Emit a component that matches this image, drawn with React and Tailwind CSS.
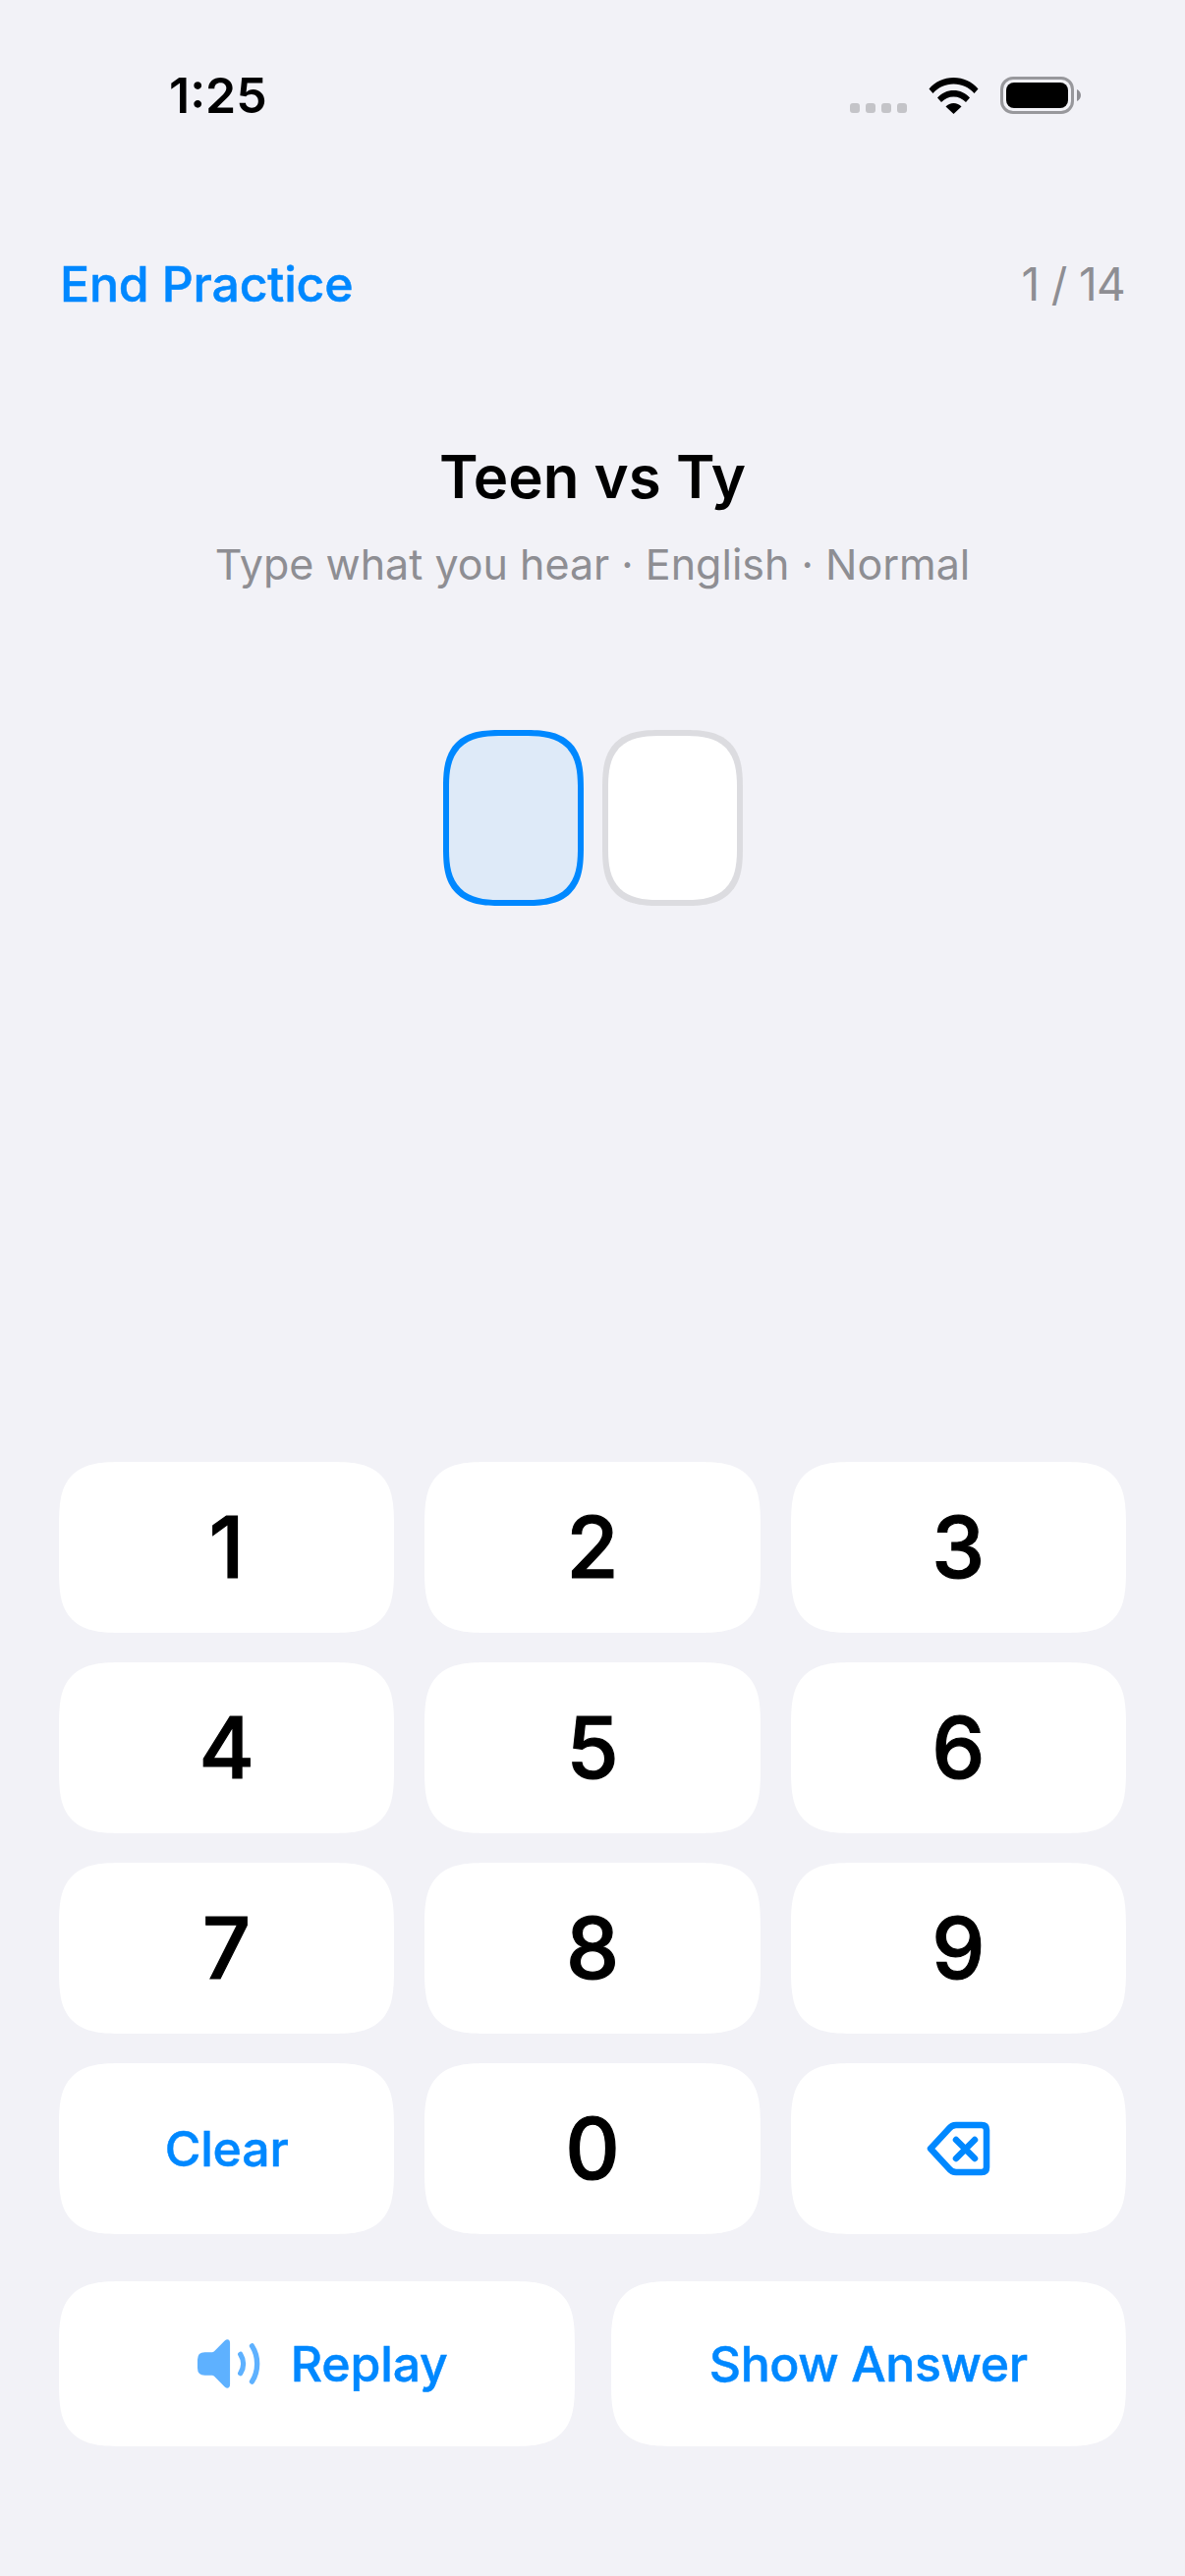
const BLUE = '#0088ff';

const SignalDots = () => (
  <div className="flex gap-[6px] pb-[1px]">
    {[0, 1, 2, 3].map((i) => (
      <div key={i} className="w-[10px] h-[10px] rounded-[3px] bg-[#c4c4c8]" />
    ))}
  </div>
);

const WifiIcon = () => (
  <svg width="51" height="38" viewBox="0 0 51 38" fill="#000">
    <path d="M0.5 12.5 C7 5 15.5 1 25.5 1 C35.5 1 44 5 50.5 12.5 L46.5 17 C41 11 34 7.5 25.5 7.5 C17 7.5 10 11 4.5 17 Z" />
    <path d="M9 21.5 C13.5 16.5 19 14 25.5 14 C32 14 37.5 16.5 42 21.5 L38 26 C34.5 22.5 30.5 20.5 25.5 20.5 C20.5 20.5 16.5 22.5 13 26 Z" />
    <path d="M17.5 30.5 C19.5 28.5 22.5 27 25.5 27 C28.5 27 31.5 28.5 33.5 30.5 L25.5 38 Z" />
  </svg>
);

const BatteryIcon = () => (
  <div className="flex items-center gap-[3px]">
    <div className="w-[75px] h-[38px] rounded-[13px] border-[3px] border-[#98989c] p-[3px]">
      <div className="w-full h-full rounded-[8px] bg-black" />
    </div>
    <svg width="4" height="12" viewBox="0 0 4 12" fill="#8e8e93">
      <path d="M0 0 C2.5 1 4 3.5 4 6 C4 8.5 2.5 11 0 12 Z" />
    </svg>
  </div>
);

const BackspaceIcon = () => (
  <svg width="65" height="56" viewBox="0 0 65 56" fill="none" stroke={BLUE} strokeWidth="6.5" strokeLinejoin="round" strokeLinecap="round">
    <path d="M4 28 L22.5 8 Q25.5 4 30 4 L56 4 Q61 4 61 9 L61 47 Q61 52 56 52 L30 52 Q25.5 52 22.5 48 Z" />
    <path d="M30 19 L49 38 M49 19 L30 38" />
  </svg>
);

const SpeakerIcon = () => (
  <svg width="64" height="52" viewBox="0 0 60 48" fill="none">
    <path
      d="M7 13 L14 13 Q15 13 16 12 L26 2 C28 0 31 0.5 31 4 L31 44 C31 47.5 28 48 26 46 L16 36 Q15 35 14 35 L7 35 Q0 35 0 28 L0 20 Q0 13 7 13 Z"
      fill="#5eb1ff"
    />
    <path d="M41 15 C44.5 20.5 44.5 27.5 41 33" stroke="#5eb1ff" strokeWidth="5" strokeLinecap="round" />
    <path d="M52 7 C58.5 17 58.5 31 52 41" stroke="#5eb1ff" strokeWidth="5" strokeLinecap="round" />
  </svg>
);

const Key = ({ children }) => (
  <button className="h-[174px] rounded-[66px] [corner-shape:superellipse(1.6)] bg-white flex items-center justify-center">
    {children}
  </button>
);

const Digit = ({ value }) => (
  <Key>
    <span className="text-[86px] font-medium text-black leading-none [-webkit-text-stroke:1.2px_black]">{value}</span>
  </Key>
);

export default function App() {
  return (
    <div className="w-[1206px] h-[2622px] bg-[#f2f2f7] flex flex-col font-['Inter',sans-serif] overflow-hidden">
      {/* Status bar */}
      <div className="h-[78px] mt-[60px] pl-[172px] pr-[106px] flex items-start justify-between">
        <span className="text-[50px] font-semibold text-black leading-[74px]">1:25</span>
        <div className="flex items-end gap-[22px] pt-[18px]">
          <SignalDots />
          <WifiIcon />
          <BatteryIcon />
        </div>
      </div>

      {/* Nav */}
      <div className="mt-[120px] px-[61px] flex items-center justify-between h-[62px]">
        <button className="text-[50px] font-medium text-[#0088ff] leading-none tracking-[-0.2px] [-webkit-text-stroke:0.5px_#0088ff]">End Practice</button>
        <span className="text-[46px] text-[#8e8e93] leading-none tracking-[-0.7px]">1 / 14</span>
      </div>

      {/* Title */}
      <div className="mt-[127px] flex flex-col items-center">
        <h1 className="text-[60px] font-semibold text-black leading-[76px]">Teen vs Ty</h1>
        <p className="mt-[23px] text-[43px] text-[#8e8e93] leading-[56px]">Type what you hear · English · Normal</p>
      </div>

      {/* Answer slots */}
      <div className="mt-[141px] flex justify-center gap-[19px]">
        <div className="w-[143px] h-[179px] rounded-[60px] [corner-shape:superellipse(1.5)] border-[6px] border-[#0088ff] bg-[#deeaf8]" />
        <div className="w-[143px] h-[179px] rounded-[60px] [corner-shape:superellipse(1.5)] border-[6px] border-[#dcdce0] bg-white" />
      </div>

      {/* Keypad */}
      <div className="mt-auto mb-[132px] px-[60px] flex flex-col">
        <div className="grid grid-cols-3 gap-x-[31px] gap-y-[30px]">
          {[1, 2, 3, 4, 5, 6, 7, 8, 9].map((n) => (
            <Digit key={n} value={n} />
          ))}
          <Key>
            <span className="text-[50px] font-medium text-[#0088ff] leading-none tracking-[-0.2px] [-webkit-text-stroke:0.5px_#0088ff]">Clear</span>
          </Key>
          <Digit value={0} />
          <Key>
            <BackspaceIcon />
          </Key>
        </div>
        <div className="mt-[48px] grid grid-cols-2 gap-x-[37px]">
          <button className="h-[168px] pl-[12px] rounded-[66px] [corner-shape:superellipse(1.6)] bg-white flex items-center justify-center gap-[31px]">
            <SpeakerIcon />
            <span className="text-[50px] font-medium text-[#0088ff] leading-none tracking-[-0.2px] [-webkit-text-stroke:0.5px_#0088ff]">Replay</span>
          </button>
          <button className="h-[168px] rounded-[66px] [corner-shape:superellipse(1.6)] bg-white flex items-center justify-center">
            <span className="text-[50px] font-medium text-[#0088ff] leading-none tracking-[-0.4px] [-webkit-text-stroke:0.5px_#0088ff]">Show Answer</span>
          </button>
        </div>
      </div>
    </div>
  );
}
